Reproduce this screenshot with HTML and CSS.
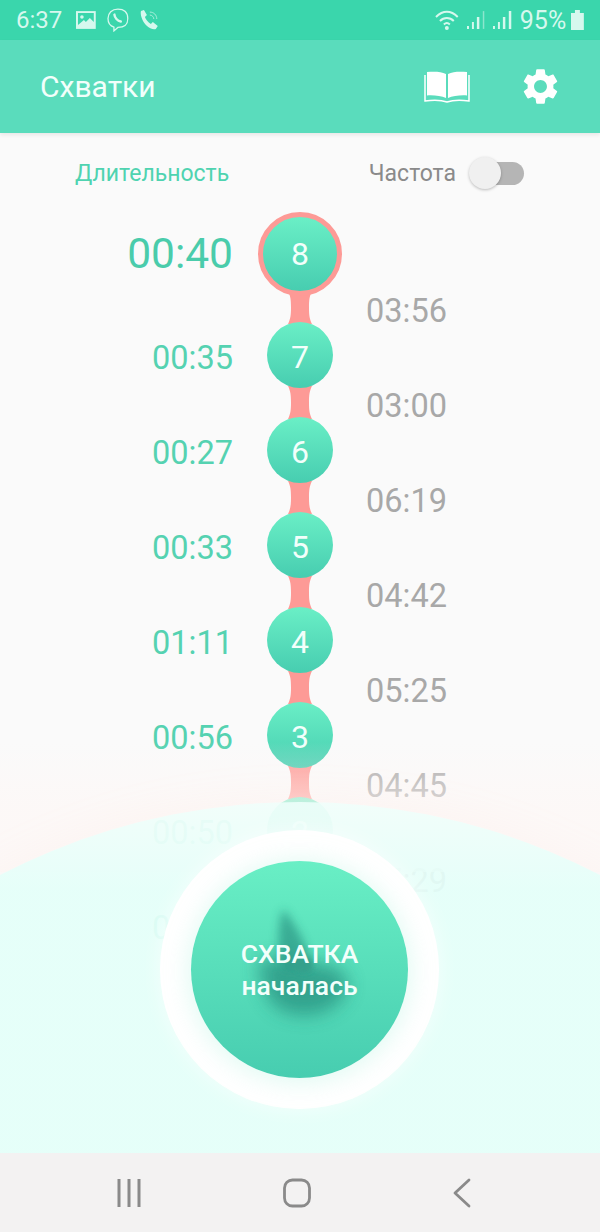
FILE: index.html
```html
<!DOCTYPE html>
<html lang="ru">
<head>
	<meta charset="UTF-8">
	<title>Схватки</title>
	<link rel="stylesheet" href="styles.css">
</head>
<body>
	<div class="statusbar">
		<span class="clock">6:37</span>
		<svg class="st-img" viewBox="0 0 20 18"><path fill="#d6f8ee" d="M0 0h20v18H0z"/><path fill="#3ad6ac" d="M2 2h16v9l-4-4-4 4-2-2-6 5z"/><circle cx="6" cy="6" r="1.8" fill="#d6f8ee"/></svg>
		<svg class="st-viber" viewBox="0 0 22 24"><path fill="none" stroke="#d6f8ee" stroke-width="1.3" d="M11 1c6 0 10 2.500 10 9.500S17 19.500 11 19.500l-4 3.500v-3.800C3 18 1 16 1 10.500S5 1 11 1z"/><path fill="none" stroke="#d6f8ee" stroke-width="2.400" stroke-linecap="round" d="M7.500 6.500c.3 3 3 6.500 6.500 7"/></svg>
		<svg class="st-call" viewBox="0 0 20 20"><path fill="#d6f8ee" d="M2 1l3-1 3 5-2 2c1 3 3 5 6 7l2-2 5 4-2 3c-2 1-6 0-10-4S1 4 2 1z"/><path fill="none" stroke="#a9eeda" stroke-width="1" d="M11 5c2 0 4 2 4 4M11 2c4 0 7 3 7 7"/></svg>
		<svg class="st-wifi" viewBox="0 0 26 22"><path fill="none" stroke="#d6f8ee" stroke-width="2" d="M1 8c7-7 15-7 22 0M5 12c4-4 10-4 14 0M9 15.500c2-2 4-2 6 0"/><circle cx="12" cy="19" r="2" fill="#d6f8ee"/></svg>
		<svg class="st-signal" viewBox="0 0 22 20"><path fill="#d6f8ee" d="M1 16h2v3H1zM6 12h2v7H6zM11 7h2.500v12H11z"/><path fill="#8ce6cd" d="M17 1h1.500v18H17z"/></svg>
		<svg class="st-signal" viewBox="0 0 22 20"><path fill="#d6f8ee" d="M1 16h2v3H1zM6 12h2v7H6zM11 7h2.500v12H11zM17 1h2.500v18H17z"/></svg>
		<span class="battery-text">95%</span>
		<svg class="st-battery" viewBox="0 0 13 20"><path fill="#d6f8ee" d="M0 3h13v17H0zM4 0h5v3H4z"/></svg>
	</div>

	<header class="appbar">
		<span class="title">Схватки</span>
		<svg class="book-icon" viewBox="0 0 46 32">
			<path fill="#fff" d="M3 1c7-.6 14-.6 19 2v24c-5-2-12-3-19-2.500z"/>
			<path fill="#fff" d="M43 1c-7-.6-14-.6-19 2v24c5-2 12-3 19-2.500z"/>
			<path fill="none" stroke="#fff" stroke-width="1.500" d="M1 4v26c8-1 16-1 22 1 6-2 14-2 22-1V4"/>
		</svg>
		<svg class="gear-icon" viewBox="0 0 24 24"><path fill="#fff" d="M19.140 12.940c.04-.3.06-.61.06-.94 0-.32-.02-.64-.07-.94l2.030-1.580c.18-.14.23-.41.12-.61l-1.920-3.320c-.12-.22-.37-.29-.59-.22l-2.390.96c-.5-.38-1.030-.7-1.620-.94l-.36-2.540c-.04-.24-.24-.41-.48-.41h-3.840c-.24 0-.43.17-.47.41l-.36 2.540c-.59.24-1.130.57-1.620.94l-2.390-.96c-.22-.08-.47 0-.59.22L2.740 8.870c-.12.21-.08.47.12.61l2.030 1.580c-.05.3-.09.63-.09.94s.02.64.07.94l-2.030 1.580c-.18.14-.23.41-.12.61l1.920 3.320c.12.22.37.29.59.22l2.390-.96c.5.38 1.030.7 1.620.94l.36 2.540c.05.24.24.41.48.41h3.840c.24 0 .44-.17.47-.41l.36-2.540c.59-.24 1.130-.56 1.620-.94l2.390.96c.22.08.47 0 .59-.22l1.920-3.320c.12-.22.07-.47-.12-.61l-2.010-1.580zM12 15.600c-1.980 0-3.600-1.620-3.600-3.600s1.620-3.600 3.600-3.600 3.600 1.620 3.600 3.600-1.620 3.600-3.600 3.600z"/></svg>
	</header>

	<main class="content">
		<div class="tabs">
			<span class="tab-active">Длительность</span>
			<div class="tab-right">
				<span class="tab-label">Частота</span>
				<div class="switch"><div class="switch-thumb"></div></div>
			</div>
		</div>

		<div class="timeline">
			<div class="durations">
				<div class="dur dur-current">00:40</div>
				<div class="dur">00:35</div>
				<div class="dur">00:27</div>
				<div class="dur">00:33</div>
				<div class="dur">01:11</div>
				<div class="dur">00:56</div>
				<div class="dur">00:50</div>
				<div class="dur">00:44</div>
			</div>
			<div class="nodes">
				<div class="node node-current">8</div>
				<svg class="neck" viewBox="0 0 40 33"><path d="M8 0h24c-2.500 5-3 9-3 16.500s.5 11.500 3 16.500H8c2.500-5 3-9 3-16.500S10.500 5 8 0z"/></svg>
				<div class="node">7</div>
				<svg class="neck" viewBox="0 0 40 33"><path d="M8 0h24c-2.500 5-3 9-3 16.500s.5 11.500 3 16.500H8c2.500-5 3-9 3-16.500S10.500 5 8 0z"/></svg>
				<div class="node">6</div>
				<svg class="neck" viewBox="0 0 40 33"><path d="M8 0h24c-2.500 5-3 9-3 16.500s.5 11.500 3 16.500H8c2.500-5 3-9 3-16.500S10.500 5 8 0z"/></svg>
				<div class="node">5</div>
				<svg class="neck" viewBox="0 0 40 33"><path d="M8 0h24c-2.500 5-3 9-3 16.500s.5 11.500 3 16.500H8c2.500-5 3-9 3-16.500S10.500 5 8 0z"/></svg>
				<div class="node">4</div>
				<svg class="neck" viewBox="0 0 40 33"><path d="M8 0h24c-2.500 5-3 9-3 16.500s.5 11.500 3 16.500H8c2.500-5 3-9 3-16.500S10.500 5 8 0z"/></svg>
				<div class="node">3</div>
				<svg class="neck" viewBox="0 0 40 33"><path d="M8 0h24c-2.500 5-3 9-3 16.500s.5 11.500 3 16.500H8c2.500-5 3-9 3-16.500S10.500 5 8 0z"/></svg>
				<div class="node">2</div>
			</div>
			<div class="intervals">
				<div class="gap-time">03:56</div>
				<div class="gap-time">03:00</div>
				<div class="gap-time">06:19</div>
				<div class="gap-time">04:42</div>
				<div class="gap-time">05:25</div>
				<div class="gap-time">04:45</div>
				<div class="gap-time">05:29</div>
			</div>
		</div>

		<div class="dock">
			<div class="arc"></div>
			<div class="ring">
				<div class="start-btn">
					<svg class="blob" viewBox="0 0 217 217">
						<defs>
							<filter id="soft" x="-40%" y="-40%" width="180%" height="180%"><feGaussianBlur stdDeviation="9"/></filter>
							<filter id="mid" x="-40%" y="-40%" width="180%" height="180%"><feGaussianBlur stdDeviation="5"/></filter>
							<filter id="sharp" x="-30%" y="-30%" width="160%" height="160%"><feGaussianBlur stdDeviation="2"/></filter>
						</defs>
						<path filter="url(#soft)" fill="#2a9583" opacity=".8" d="M68 100c16-6 34-2 50 4 16-4 30 2 38 14 4 14-8 28-26 34-22 6-44 0-52-14-6-12-12-26-10-38z"/>
						<path filter="url(#mid)" fill="#2a9583" opacity=".7" d="M92 48c12 14 24 36 30 60l-30 2c-6-18-6-44 0-62z"/>
						<path filter="url(#sharp)" fill="#35a08c" opacity=".9" d="M98 103c6-8 16-4 20-6 3 4 4 8 1 14-7 2-16 0-21-8z"/>
					</svg>
					<span class="btn-line">СХВАТКА</span>
					<span class="btn-line">началась</span>
				</div>
			</div>
		</div>
	</main>

	<nav class="navbar">
		<svg class="nav-recent" viewBox="0 0 24 30"><path stroke="#8a8a8a" stroke-width="3" d="M2 1v28M12 1v28M22 1v28"/></svg>
		<svg class="nav-home" viewBox="0 0 28 30"><rect x="1.500" y="2" width="25" height="26" rx="8" fill="none" stroke="#8a8a8a" stroke-width="2.800"/></svg>
		<svg class="nav-back" viewBox="0 0 18 30"><path fill="none" stroke="#8a8a8a" stroke-width="2.800" stroke-linecap="round" stroke-linejoin="round" d="M16 2L2 15l14 13"/></svg>
	</nav>
</body>
</html>
```

FILE: styles.css
```css
*{
	margin: 0;
	padding: 0;
	box-sizing: border-box;
}
body{
	width: 600px;
	height: 1232px;
	overflow: hidden;
	display: flex;
	flex-direction: column;
	font-family: Roboto, "Liberation Sans", sans-serif;
	background: #fafafa;
}

/* status bar */
.statusbar{
	height: 40px;
	flex: none;
	display: flex;
	align-items: center;
	padding: 0 16px;
	background: #3ad6ac;
	color: #d6f8ee;
	font-size: 24px;
}
.clock{
	width: 61px;
}
.st-img{
	width: 20px;
	height: 18px;
	margin-right: 11px;
}
.st-viber{
	width: 22px;
	height: 24px;
	margin-right: 10px;
}
.st-call{
	width: 20px;
	height: 20px;
	margin-right: 276px;
}
.st-wifi{
	width: 26px;
	height: 22px;
	margin-right: 6px;
}
.st-signal{
	width: 22px;
	height: 20px;
	margin-right: 4px;
}
.battery-text{
	margin-left: 2px;
	font-size: 25px;
	width: 52px;
}
.st-battery{
	width: 13px;
	height: 20px;
}

/* app bar */
.appbar{
	height: 93px;
	flex: none;
	display: flex;
	align-items: center;
	padding: 0 38px 0 40px;
	background: #5adcbc;
	box-shadow: 0 2px 4px rgba(0,0,0,.08);
	position: relative;
	z-index: 3;
}
.title{
	flex: 1;
	font-size: 30px;
	color: #f2fffb;
}
.book-icon{
	width: 46px;
	height: 32px;
	margin-right: 49px;
}
.gear-icon{
	width: 43px;
	height: 43px;
}

/* main area */
.content{
	flex: 1;
	position: relative;
	overflow: hidden;
	background: #fafafa;
}
.tabs{
	height: 80px;
	display: flex;
	align-items: center;
	justify-content: space-between;
	padding: 0 76px 0 75px;
	font-size: 23px;
}
.tab-active{
	color: #4fd3b0;
}
.tab-right{
	display: flex;
	align-items: center;
	gap: 14px;
}
.tab-label{
	color: #8a8a8a;
}
.switch{
	width: 54px;
	height: 23px;
	border-radius: 12px;
	background: #b5b5b5;
	position: relative;
}
.switch-thumb{
	position: absolute;
	left: -1px;
	top: -5px;
	width: 32px;
	height: 32px;
	border-radius: 50%;
	background: #f0f0f0;
	box-shadow: 0 1px 3px rgba(0,0,0,.25);
}

.timeline{
	display: flex;
}
.durations{
	flex: 0 0 233px;
	text-align: right;
	color: #55d2b1;
	font-size: 32.500px;
}
.dur{
	height: 95px;
	line-height: 95px;
}
.dur-current{
	height: 98px;
	line-height: 82px;
	font-size: 42.500px;
	color: #4accab;
}
.nodes{
	flex: 0 0 84px;
	margin: 0 24px 0 25px;
	display: flex;
	flex-direction: column;
	align-items: center;
}
.node{
	position: relative;
	z-index: 1;
	flex: none;
	width: 66px;
	height: 66px;
	padding-top: 3px;
	border-radius: 50%;
	display: flex;
	align-items: center;
	justify-content: center;
	font-size: 32px;
	color: #f2fffb;
	background: linear-gradient(180deg, #6aefc6, #47cdb0);
}
.node-current{
	width: 84px;
	height: 84px;
	margin-top: -1px;
	padding-top: 0;
	border: 5px solid #fd9a96;
}
.neck{
	flex: none;
	width: 40px;
	height: 33px;
	margin: -2px 0;
	fill: #fd9a96;
}
.node-current + .neck{
	margin-top: -5px;
}
.intervals{
	padding-top: 51px;
	color: #a8a8a8;
	font-size: 32.500px;
}
.gap-time{
	height: 95px;
	line-height: 95px;
}

/* bottom part with the button, lies over the timeline */
.dock{
	position: absolute;
	z-index: 2;
	left: 0;
	right: 0;
	bottom: 0;
	height: 351px;
	padding: 28px 1px 0 0;
	display: flex;
	justify-content: center;
	align-items: flex-start;
}
.dock::before{
	content: "";
	position: absolute;
	left: 0;
	right: 0;
	top: -60px;
	height: 130px;
	background: linear-gradient(180deg, rgba(253,249,248,0), rgba(254,247,245,.6) 50%);
}
.arc{
	position: absolute;
	left: -353px;
	top: 0;
	width: 1306px;
	height: 1306px;
	border-radius: 50%;
	background: linear-gradient(180deg, rgba(240,255,251,.86), rgba(228,255,249,.93) 90px);
	box-shadow: 0 -6px 40px rgba(255,200,190,.08);
}
.ring{
	position: relative;
	width: 279px;
	height: 279px;
	border-radius: 50%;
	background: #fff;
	display: flex;
	align-items: center;
	justify-content: center;
	box-shadow: 0 0 20px rgba(255,255,255,.6);
}
.start-btn{
	position: relative;
	width: 217px;
	height: 217px;
	border-radius: 50%;
	background: linear-gradient(180deg, #69efc5, #47cdb0);
	box-shadow: 0 2px 24px 2px rgba(210,248,236,.7);
	display: flex;
	flex-direction: column;
	align-items: center;
	justify-content: center;
	font-size: 26.500px;
	font-weight: 500;
	line-height: 32px;
	color: #f2fffb;
	overflow: hidden;
}
.blob{
	position: absolute;
	left: 0;
	top: 0;
	width: 217px;
	height: 217px;
}
.btn-line{
	position: relative;
}

/* bottom navigation */
.navbar{
	height: 79px;
	flex: none;
	display: flex;
	align-items: center;
	justify-content: space-between;
	padding: 0 129px 0 117px;
	background: #f3f2f2;
	position: relative;
}
.nav-recent{
	width: 24px;
	height: 30px;
}
.nav-home{
	width: 28px;
	height: 30px;
}
.nav-back{
	width: 18px;
	height: 30px;
}
```
